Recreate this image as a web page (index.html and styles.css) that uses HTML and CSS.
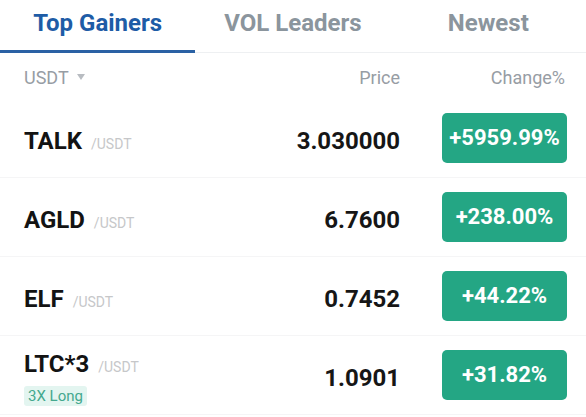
FILE: index.html
```html
<!DOCTYPE html>
<html lang="en">
<head>
    <meta charset="UTF-8">
    <meta name="viewport" content="width=device-width, initial-scale=1.0">
    <title>Markets</title>
    <link rel="stylesheet" href="styles.css">
</head>
<body>

    <div class="tabs">
        <div class="tab active">Top Gainers</div>
        <div class="tab">VOL Leaders</div>
        <div class="tab">Newest</div>
    </div>

    <div class="list-head">
        <div class="quote">USDT <span class="caret"></span></div>
        <div class="col-price">Price</div>
        <div class="col-change">Change%</div>
    </div>

    <div class="row">
        <div class="pair"><span class="base">TALK</span><span class="quote-sym">/USDT</span></div>
        <div class="price">3.030000</div>
        <div class="change">+5959.99%</div>
    </div>

    <div class="row">
        <div class="pair"><span class="base">AGLD</span><span class="quote-sym">/USDT</span></div>
        <div class="price">6.7600</div>
        <div class="change">+238.00%</div>
    </div>

    <div class="row">
        <div class="pair"><span class="base">ELF</span><span class="quote-sym">/USDT</span></div>
        <div class="price">0.7452</div>
        <div class="change">+44.22%</div>
    </div>

    <div class="row">
        <div class="pair-stack">
            <div class="pair"><span class="base">LTC*3</span><span class="quote-sym">/USDT</span></div>
            <span class="tag">3X Long</span>
        </div>
        <div class="price">1.0901</div>
        <div class="change">+31.82%</div>
    </div>

</body>
</html>
```

FILE: styles.css
```css
body {
    margin: 0;
    font-family: Roboto, "Liberation Sans", sans-serif;
    background: #fff;
    color: #151515;
}

.tabs {
    display: grid;
    grid-template-columns: repeat(3, 1fr);
    border-bottom: 1px solid #eef0f2;
}

.tab {
    height: 50px;
    line-height: 46px;
    text-align: center;
    font-size: 24px;
    font-weight: 700;
    color: #8b959d;
    border-bottom: 3px solid transparent;
    margin-bottom: -1px;
}

.tab.active {
    color: #1e5ca6;
    border-bottom-color: #2a61a4;
}

.list-head,
.row {
    display: grid;
    grid-template-columns: 1fr 160px 125px;
    column-gap: 42px;
    align-items: center;
    padding: 0 19px 0 24px;
}

.list-head {
    height: 46px;
    font-size: 18px;
    color: #979da4;
}

.list-head > div {
    padding-top: 2px;
}

.quote {
    display: flex;
    align-items: center;
    gap: 8px;
}

.caret {
    width: 0;
    height: 0;
    border-left: 4px solid transparent;
    border-right: 4px solid transparent;
    border-top: 6px solid #b8bcc1;
}

.col-price {
    text-align: right;
}

.col-change {
    text-align: right;
    padding-right: 2px;
}

.row {
    height: 78px;
    border-bottom: 1px solid #f5f5f6;
}

.pair {
    display: flex;
    align-items: baseline;
    gap: 9px;
    padding-top: 5px;
}

.base {
    font-size: 24px;
    font-weight: 700;
    color: #131313;
}

.quote-sym {
    font-size: 14px;
    color: #c6c7c9;
}

.pair-stack {
    display: flex;
    flex-direction: column;
    align-items: flex-start;
    gap: 8px;
    padding-top: 6px;
}

.pair-stack .pair {
    padding-top: 0;
}

.tag {
    font-size: 15px;
    line-height: 20px;
    padding: 0 4px;
    border-radius: 3px;
    background: #e3f5f0;
    color: #44a88e;
}

.price {
    text-align: right;
    font-size: 24px;
    font-weight: 700;
    color: #161616;
    padding-top: 5px;
}

.change {
    height: 50px;
    line-height: 50px;
    border-radius: 5px;
    background: #24a684;
    color: #fff;
    text-align: center;
    font-size: 22px;
    font-weight: 700;
}
```
